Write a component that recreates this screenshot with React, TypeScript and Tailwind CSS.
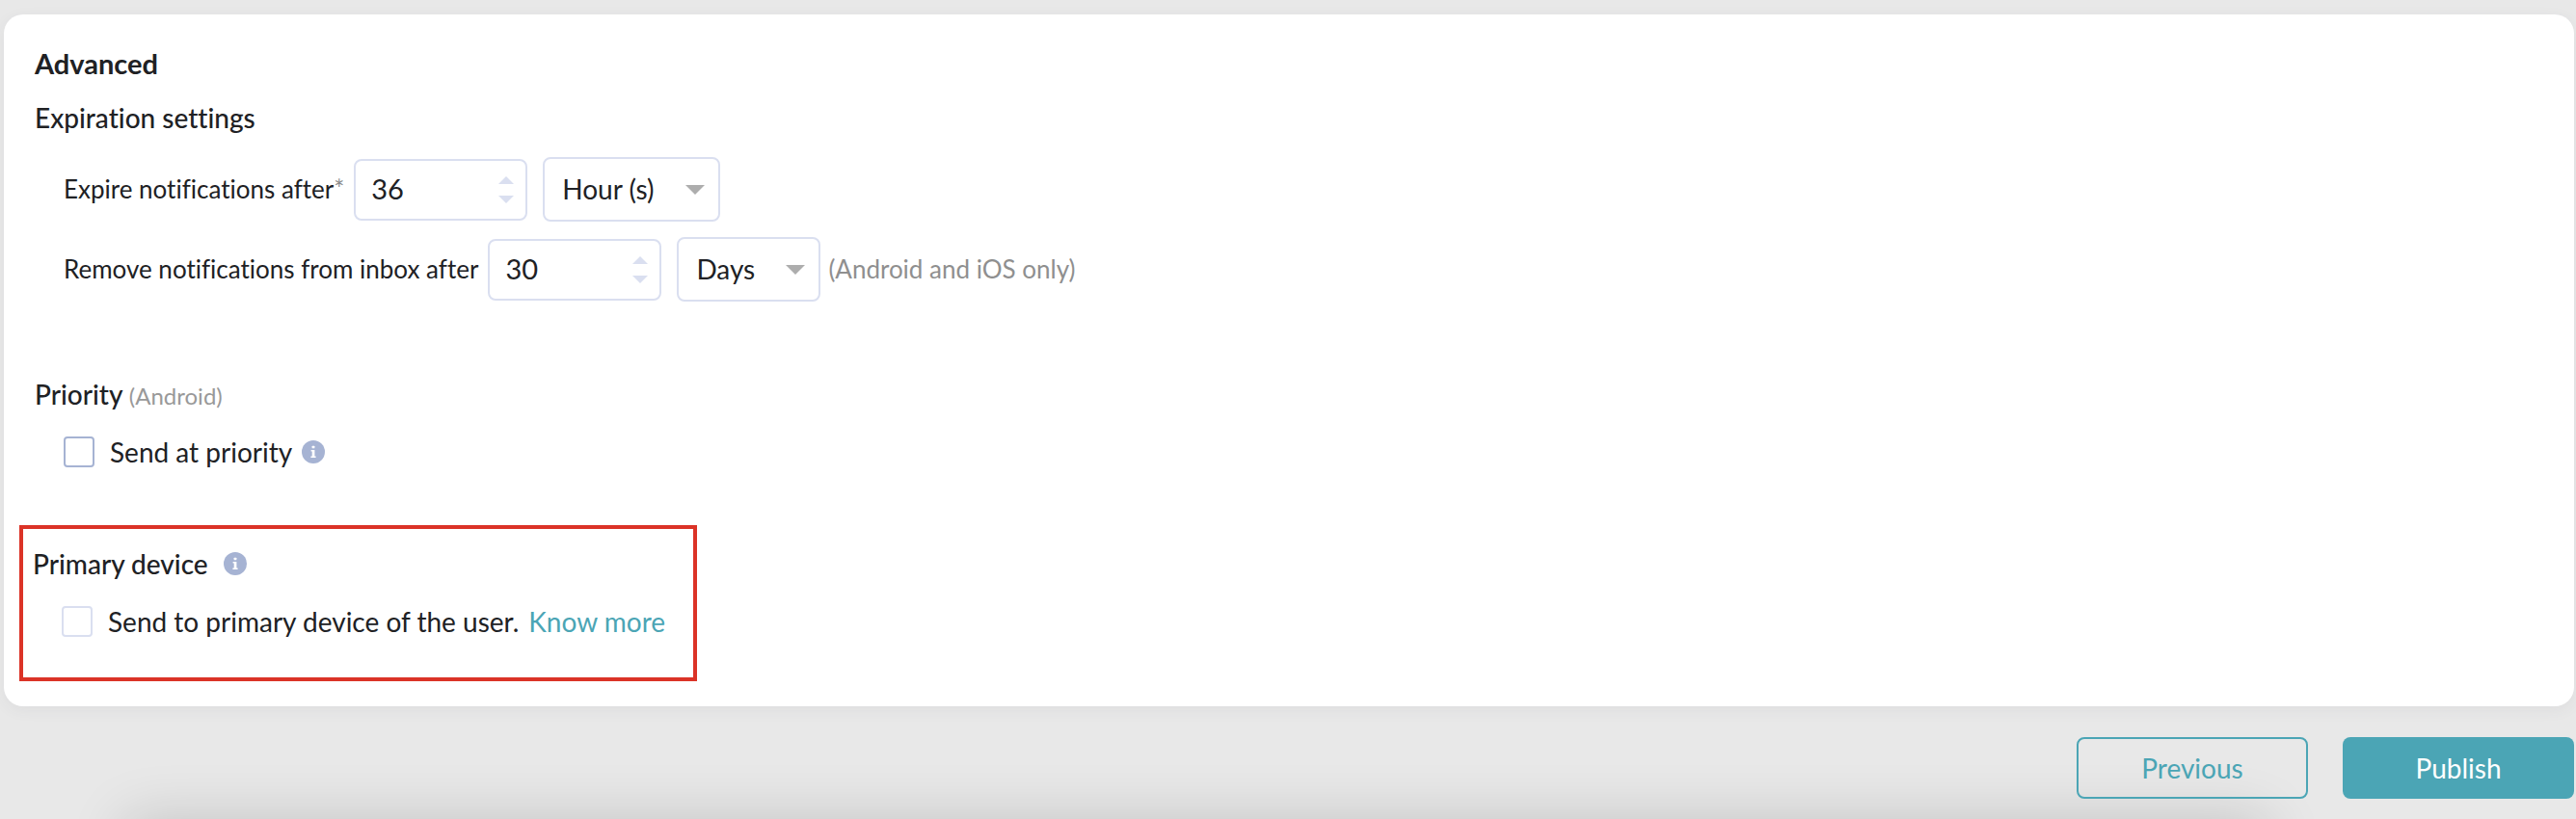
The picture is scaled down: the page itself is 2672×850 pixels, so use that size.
import { useState, type ReactNode } from "react";

function InfoIcon({ label }: { label: string }) {
  return (
    <svg role="img" aria-label={label} viewBox="0 0 24 24" className="size-6 shrink-0">
      <circle cx="12" cy="12" r="12" fill="#a6b3d3" />
      <rect x="10.6" y="5.8" width="2.8" height="2.4" rx="0.5" fill="#fff" />
      <path d="M9.6 10h3.8v6.4h1.2V18H9.4v-1.6h1.3v-4.8H9.6z" fill="#fff" />
    </svg>
  );
}

function NumberField({ id, initial }: { id: string; initial: number }) {
  const [value, setValue] = useState(initial);
  return (
    <div className="flex h-16 w-[180px] items-center rounded-lg border-2 border-[#dadff0] bg-white pr-3">
      <input
        id={id}
        type="number"
        value={value}
        onChange={(e) => setValue(Number(e.target.value))}
        className="h-full min-w-0 flex-1 appearance-none bg-transparent pb-0.5 pl-4 text-[29px] outline-none [-moz-appearance:textfield] [&::-webkit-inner-spin-button]:appearance-none"
      />
      <div className="flex flex-col gap-3">
        <button type="button" aria-label="Increase" className="block" onClick={() => setValue(value + 1)}>
          <svg viewBox="0 0 16 8" className="h-2 w-4">
            <path d="M0 8 8 0l8 8z" fill="#dadff0" />
          </svg>
        </button>
        <button type="button" aria-label="Decrease" className="block" onClick={() => setValue(value - 1)}>
          <svg viewBox="0 0 16 8" className="h-2 w-4">
            <path d="M0 0h16L8 8z" fill="#dadff0" />
          </svg>
        </button>
      </div>
    </div>
  );
}

function UnitSelect({ label, options, width }: { label: string; options: string[]; width: string }) {
  return (
    <div className={`relative ml-4 h-[67px] ${width}`}>
      <select
        aria-label={label}
        className="size-full appearance-none rounded-lg border-2 border-[#dadff0] bg-white pb-0.5 pl-[18px] text-[28px] outline-none"
      >
        {options.map((option) => (
          <option key={option}>{option}</option>
        ))}
      </select>
      <svg viewBox="0 0 20 10" className="pointer-events-none absolute top-[29px] right-4 h-2.5 w-5">
        <path d="M0 0h20L10 10z" fill="#adadad" />
      </svg>
    </div>
  );
}

function CheckRow({ id, border, children }: { id: string; border: string; children: ReactNode }) {
  return (
    <div className="flex h-8 items-center">
      <input id={id} type="checkbox" className={`mr-4 size-8 shrink-0 appearance-none rounded-sm border-2 bg-white ${border}`} />
      {children}
    </div>
  );
}

export default function App() {
  return (
    <div className="relative min-h-screen overflow-hidden bg-[#e8e8e8] px-1 pt-[15px] font-[Lato,sans-serif] text-[#202124] [font-variant-ligatures:none]">
      <div className="absolute inset-x-0 top-full mr-[320px] ml-[130px] h-20 shadow-[0_0_60px_0_rgba(0,0,0,0.16)]" />
      <main className="relative mr-[-2px] rounded-[20px] bg-white px-4 pt-[33px] pb-[26px] shadow-[0_4px_16px_rgba(60,70,90,0.06)]">
        <section className="pl-4">
          <h1 className="text-[29px] leading-9 font-bold">Advanced</h1>
          <h2 className="mt-5 text-[28px] leading-9 font-medium">Expiration settings</h2>
          <div className="mt-[23px] flex flex-col gap-4 pl-[30px]">
            <div className="flex items-center">
              <label htmlFor="expire" className="mr-2.5 text-[26px]">
                Expire notifications after<span className="text-[#8c8c8c]">*</span>
              </label>
              <NumberField id="expire" initial={36} />
              <UnitSelect label="Expiration unit" options={["Hour (s)", "Days"]} width="w-[184px]" />
            </div>
            <div className="flex items-center">
              <label htmlFor="remove" className="mr-2.5 text-[26px]">
                Remove notifications from inbox after
              </label>
              <NumberField id="remove" initial={30} />
              <UnitSelect label="Removal unit" options={["Days", "Hour (s)"]} width="w-[149px]" />
              <span className="ml-2 text-[26px] text-[#8f8f8f]">(Android and iOS only)</span>
            </div>
          </div>
        </section>

        <section className="mt-[78px] pl-4">
          <h2 className="text-[28px] leading-9 font-medium">
            Priority <span className="text-2xl font-normal text-[#999]">(Android)</span>
          </h2>
          <div className="mt-[26px] pl-[30px]">
            <CheckRow id="priority" border="border-[#a6b3d3]">
              <label htmlFor="priority" className="mr-2.5 text-[28px]">Send at priority</label>
              <InfoIcon label="About priority" />
            </CheckRow>
          </div>
        </section>

        <section className="mt-15 w-[703px] border-4 border-[#db3327] pt-[18px] pr-6 pb-[42px] pl-2.5">
          <h2 className="flex items-center gap-4 text-[28px] leading-9 font-medium">
            Primary device <InfoIcon label="About primary device" />
          </h2>
          <div className="mt-[26px] pl-[30px]">
            <CheckRow id="primary" border="border-[#dadff0]">
              <label htmlFor="primary" className="mr-2.5 text-[28px]">Send to primary device of the user.</label>
              <a href="#know-more" className="text-[28px] text-[#4ba5b5]">Know more</a>
            </CheckRow>
          </div>
        </section>
      </main>

      <footer className="relative mr-[-2px] flex justify-end gap-9 pt-8 pb-4">
        <button type="button" className="h-16 w-60 rounded-lg border-2 border-[#4ba5b5] text-[28px] text-[#4ba5b5]">
          Previous
        </button>
        <button type="button" className="h-16 w-60 rounded-lg bg-[#4ba5b5] text-[28px] text-white">
          Publish
        </button>
      </footer>
    </div>
  );
}
